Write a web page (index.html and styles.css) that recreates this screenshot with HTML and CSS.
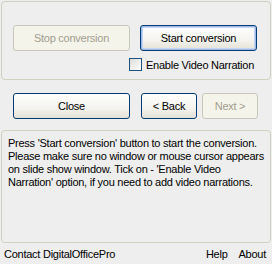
FILE: index.html
```html
<!DOCTYPE html>
<html lang="en">
<head>
<meta charset="UTF-8" />
<title>Convert</title>
<link rel="stylesheet" href="styles.css">
</head>
<body>
  <div class="group top-group">
    <div class="btn-row">
      <button class="btn wide" disabled>Stop conversion</button>
      <button class="btn wide default">Start conversion</button>
    </div>
    <label class="check-row">
      <span class="check-box"></span>
      <span>Enable Video Narration</span>
    </label>
  </div>

  <div class="nav-row">
    <button class="btn wide">Close</button>
    <div class="nav-pair">
      <button class="btn small">&lt; Back</button>
      <button class="btn small" disabled>Next &gt;</button>
    </div>
  </div>

  <div class="group info-group">
    <p class="info-text">Press 'Start conversion' button to start the conversion.<br>
    Please make sure no window or mouse cursor appears<br>
    on slide show window. Tick on - 'Enable Video<br>
    Narration' option, if you need to add video narrations.</p>
  </div>

  <div class="footer">
    <span>Contact DigitalOfficePro</span>
    <span class="links"><span>Help</span><span>About</span></span>
  </div>
</body>
</html>
```

FILE: styles.css
```css
body {
  margin: 0;
  width: 272px;
  height: 264px;
  background-color: #eeeeee;
  color: #000000;
  font-family: 'Liberation Sans', Arial, sans-serif;
  font-size: 11px;
  letter-spacing: -0.25px;
  overflow: hidden;
}
.group {
  margin-left: 1px;
  width: 268px;
  border: 1px solid #d0d0bf;
  border-radius: 4px;
}
.top-group {
  margin-top: 1px;
  height: 77px;
}
.btn-row {
  display: flex;
  gap: 10px;
  margin: 23px 0 0 11px;
}
.btn {
  box-sizing: border-box;
  height: 26px;
  padding: 0;
  font-family: inherit;
  font-size: 11px;
  letter-spacing: inherit;
  color: #000000;
  background: linear-gradient(#ffffff, #f4f3ee 60%, #e3e1d6);
  border: 1px solid #003c74;
  border-radius: 3px;
}
.btn.wide {
  width: 117px;
}
.btn.small {
  width: 56px;
}
.btn.default {
  box-shadow: inset 0 0 0 1px #9fb9e8, inset 0 0 0 2px #c3d5f5;
}
.btn:disabled {
  color: #a19d8f;
  background: #f5f4ea;
  border-color: #c9c7ba;
}
.check-row {
  display: flex;
  align-items: center;
  gap: 4px;
  margin: 7px 0 0 127px;
  white-space: nowrap;
}
.check-box {
  box-sizing: border-box;
  width: 13px;
  height: 13px;
  border: 1px solid #1c5180;
  background: linear-gradient(135deg, #dcdcd7, #ffffff);
}
.nav-row {
  display: flex;
  gap: 11px;
  margin: 13px 0 0 13px;
}
.nav-pair {
  display: flex;
  gap: 5px;
}
.info-group {
  margin-top: 11px;
  height: 111px;
}
.info-text {
  margin: 6px 0 0 6px;
  line-height: 13px;
  white-space: nowrap;
}
.footer {
  display: flex;
  justify-content: space-between;
  margin: 5px 6px 0 4px;
}
.links {
  display: flex;
  gap: 11px;
}
```
